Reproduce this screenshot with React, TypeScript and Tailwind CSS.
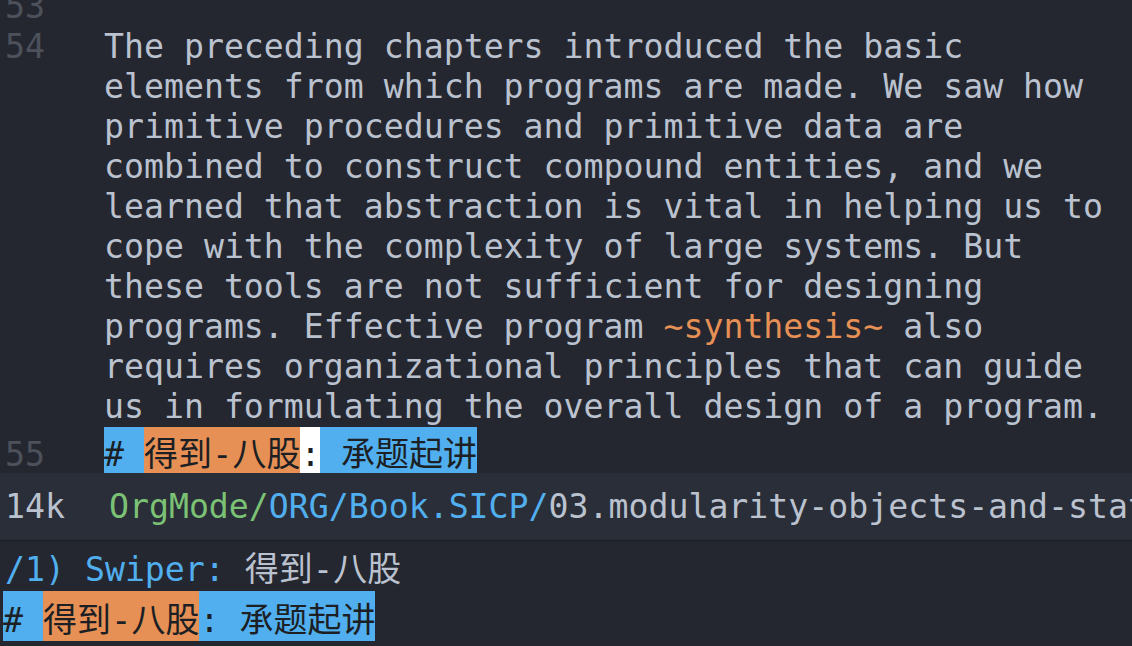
import React from 'react';

const bodyLines: React.ReactNode[] = [
  'The preceding chapters introduced the basic',
  'elements from which programs are made. We saw how',
  'primitive procedures and primitive data are',
  'combined to construct compound entities, and we',
  'learned that abstraction is vital in helping us to',
  'cope with the complexity of large systems. But',
  'these tools are not sufficient for designing',
  <>
    programs. Effective program <span className="text-[#e69055]">~synthesis~</span> also
  </>,
  'requires organizational principles that can guide',
  'us in formulating the overall design of a program.',
];

function Gutter({ n, className = '' }: { n?: number; className?: string }) {
  return <div className={`w-[104px] shrink-0 pl-[5px] text-[#4c515c] ${className}`}>{n}</div>;
}

export default function App() {
  return (
    <div className="flex h-[646px] w-[1132px] flex-col overflow-hidden bg-[#242730] font-['DejaVu_Sans_Mono','Noto_Sans_CJK_SC',monospace] text-[33.2px] whitespace-pre text-[#bbc2cf]">
      {/* buffer */}
      <div className="h-[473px] shrink-0 overflow-hidden">
        <div className="-mt-[13px]">
          <div className="flex h-[40px] leading-[40px]">
            <Gutter n={53} />
          </div>

          <div className="flex leading-[40px]">
            <Gutter n={54} />
            <div className="flex flex-col">
              {bodyLines.map((line, i) => (
                <div key={i} className="h-[40px]">
                  {line}
                </div>
              ))}
            </div>
          </div>

          <div className="flex h-[46px] leading-[37px]">
            <Gutter n={55} className="pt-[9px]" />
            <div className="flex h-full text-[#1c1f24]">
              <span className="bg-[#51afef] pt-[9px]"># </span>
              <span className="bg-[#e69055] pt-[9px] text-[34px]">得到-八股</span>
              <span className="bg-white pt-[9px]">:</span>
              <span className="bg-[#51afef] pt-[9px] text-[34px]"> 承题起讲</span>
            </div>
          </div>
        </div>
      </div>

      {/* mode line */}
      <div className="flex h-[68px] shrink-0 items-center overflow-hidden border-b border-[#1c1f24] bg-[#2a2e38] pl-[5px]">
        <span>14k</span>
        <span className="ml-[44px]">
          <span className="text-[#7bc275]">OrgMode/</span>
          <span className="text-[#51afef]">ORG/Book.SICP/</span>
          <span>03.modularity-objects-and-state.org</span>
        </span>
      </div>

      {/* minibuffer */}
      <div className="flex flex-col">
        <div className="flex h-[50px] pl-[5px] pt-[7px] leading-[43px]">
          <span className="text-[#51afef]">/1) Swiper: </span>
          <span className="text-[34px]">得到-八股</span>
        </div>
        <div className="flex h-[50px] pl-[3px] leading-[41px] text-[#1c1f24]">
          <span className="bg-[#51afef] pt-[9px]"># </span>
          <span className="bg-[#e69055] pt-[9px] text-[34px]">得到-八股</span>
          <span className="bg-[#51afef] pt-[9px]">
            : <span className="text-[34px]">承题起讲</span>
          </span>
        </div>
      </div>
    </div>
  );
}
